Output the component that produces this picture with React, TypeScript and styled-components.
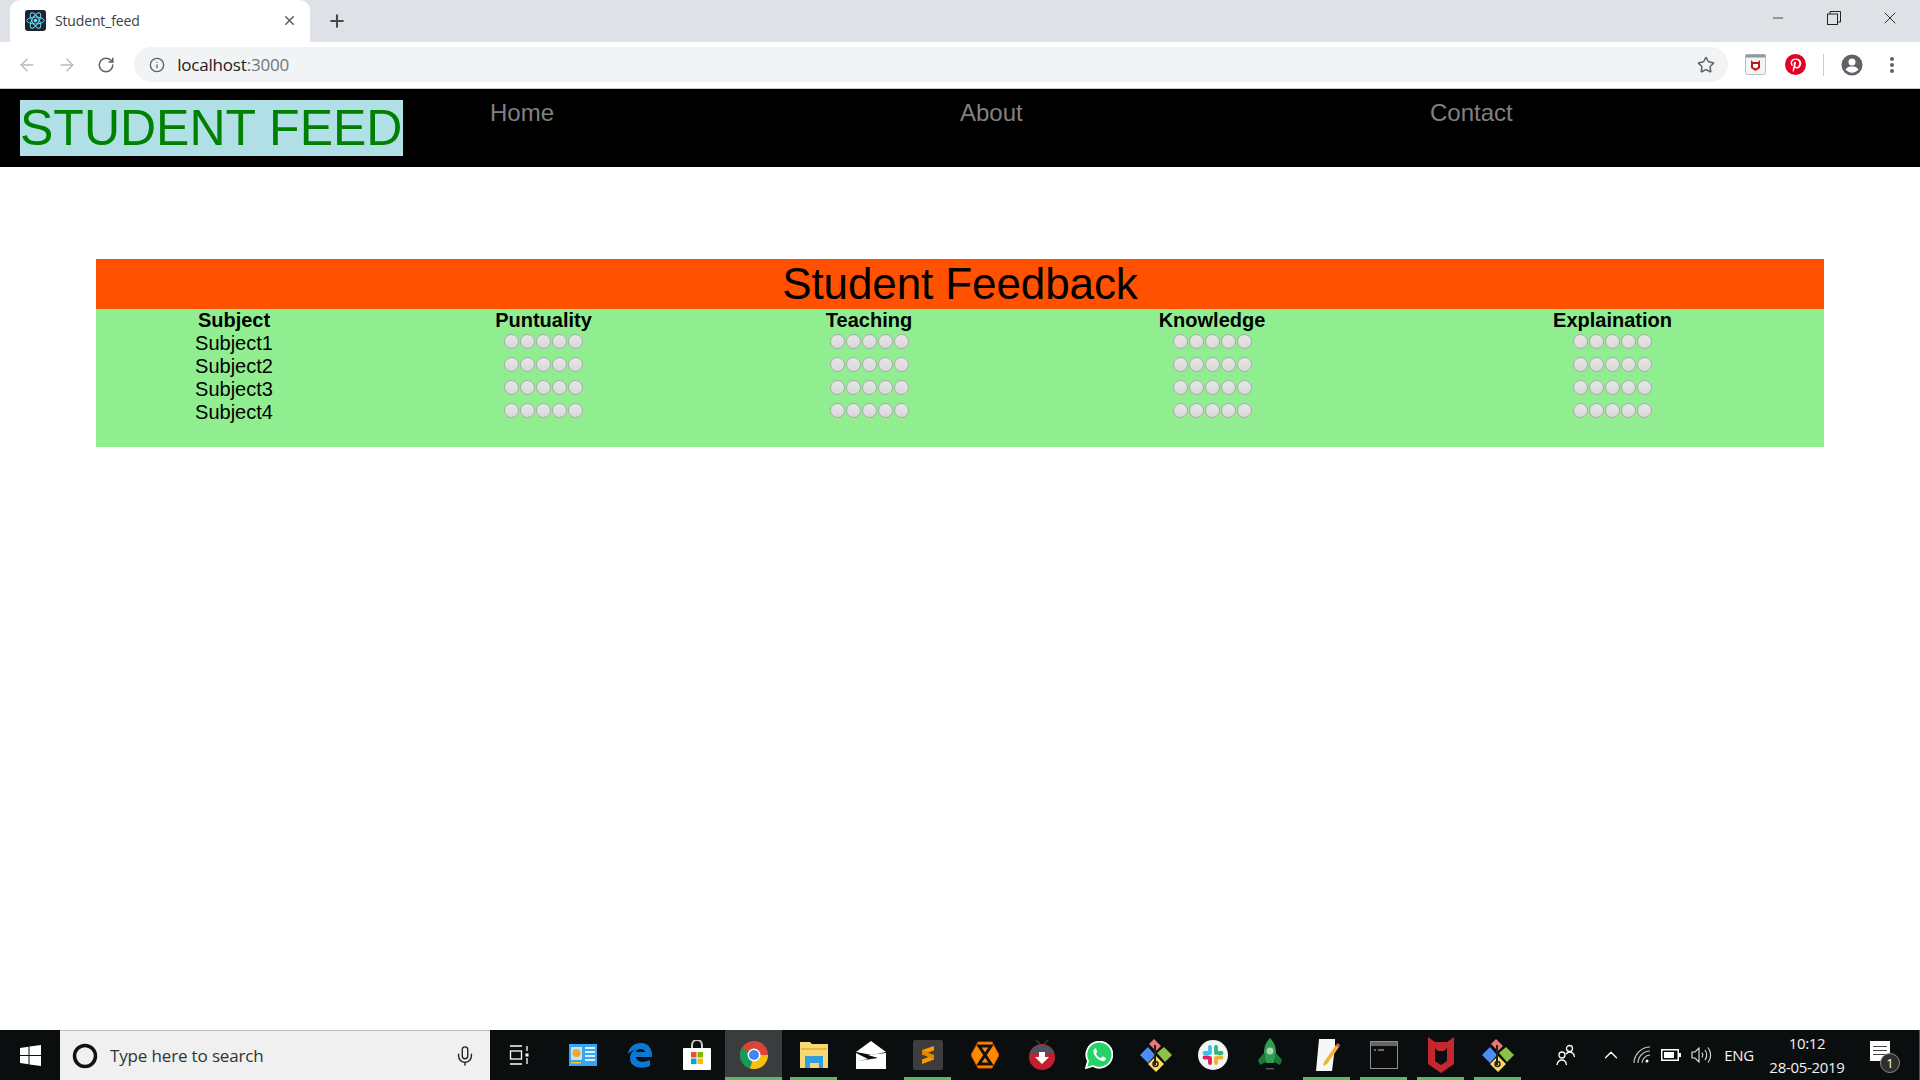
import React from "react";
import styled, { createGlobalStyle } from "styled-components";
import { ArrowLeft, ArrowRight, RotateCw, Star, Info, Plus, X, Minus, Mic, ChevronUp } from "lucide-react";

const GlobalStyle = createGlobalStyle`
  html, body { margin: 0; padding: 0; background: #fff; }
  body { font-family: "Liberation Sans", Arial, sans-serif; }
`;

const Screen = styled.div`
  width: 1920px;
  height: 1080px;
  display: flex;
  flex-direction: column;
  overflow: hidden;
`;

/* browser chrome */
const TabStrip = styled.div`
  height: 42px;
  flex: none;
  background: #dee1e6;
  display: flex;
  align-items: stretch;
  padding-left: 10px;
`;
const Tab = styled.div`
  position: relative;
  width: 300px;
  box-sizing: border-box;
  background: #fff;
  border-radius: 10px 10px 0 0;
  display: flex;
  align-items: center;
  padding: 0 13px 1px 15px;
  color: #3c4043;
  font: 14px "Open Sans", sans-serif;
  letter-spacing: -0.15px;
`;
const TabTitle = styled.span`
  margin-left: 9px;
  flex: 1;
`;
const NewTab = styled.div`
  width: 54px;
  display: flex;
  align-items: center;
  justify-content: center;
  color: #45494d;
`;
const WindowControls = styled.div`
  margin-left: auto;
  margin-right: 2px;
  display: flex;
  align-items: flex-start;
  color: #222;
`;
const WindowButton = styled.div`
  width: 56px;
  height: 35px;
  display: flex;
  align-items: center;
  justify-content: center;
`;
const Toolbar = styled.div`
  height: 47px;
  flex: none;
  box-sizing: border-box;
  background: #fff;
  border-bottom: 1px solid #c4c4c4;
  display: flex;
  align-items: center;
  padding-bottom: 1px;
  padding-left: 7px;
`;
const NavButton = styled.div<{ $off?: boolean }>`
  width: 40px;
  display: flex;
  justify-content: center;
  color: ${(p) => (p.$off ? "#b9bbbe" : "#5f6368")};
`;
const Omnibox = styled.div`
  width: 1604px;
  margin-left: 8px;
  height: 35px;
  border-radius: 18px;
  background: #f1f3f4;
  display: flex;
  align-items: center;
  box-sizing: border-box;
  padding: 0 13px 0 15px;
  color: #5f6368;
`;
const UrlText = styled.span`
  margin-left: 12px;
  flex: 1;
  font: 17px "Open Sans", sans-serif;
  letter-spacing: -0.2px;
  color: #202124;
`;
const UrlPort = styled.span`
  color: #70757a;
`;
const Extensions = styled.div`
  display: flex;
  align-items: center;
  margin-left: 15px;
`;
const ExtSlot = styled.div<{ $w: number }>`
  width: ${(p) => p.$w}px;
  display: flex;
  justify-content: center;
  align-items: center;
`;
const Divider = styled.div`
  width: 1px;
  height: 22px;
  background: #ccc;
  margin: 0 16px 0 0;
`;

/* page */
const Navbar = styled.nav`
  height: 78px;
  flex: none;
  background: #000;
  display: flex;
  align-items: flex-start;
  padding: 11px 0 0 20px;
  box-sizing: border-box;
`;
const Logo = styled.div`
  width: 383px;
  height: 56px;
  background: powderblue;
  color: green;
  font-size: 50px;
  line-height: 57px;
  white-space: nowrap;
`;
const NavLink = styled.a<{ $w: number }>`
  width: ${(p) => p.$w}px;
  color: #808080;
  font-size: 24px;
  line-height: 26px;
  flex: none;
`;
const NavLinks = styled.div`
  display: flex;
  margin-left: 87px;
`;
const Main = styled.main`
  flex: 1;
  background: #fff;
  padding: 92px 96px 0;
`;
const Heading = styled.h1`
  margin: 0;
  height: 50px;
  background: #ff5100;
  color: #000;
  font-size: 44px;
  font-weight: 400;
  line-height: 50px;
  letter-spacing: -0.1px;
  text-align: center;
`;
const Table = styled.div`
  height: 138px;
  background: lightgreen;
  font-size: 20px;
  line-height: 23px;
  color: #000;
`;
const Row = styled.div`
  display: grid;
  grid-template-columns: 276px 343px 308px 378px 423px;
  height: 23px;
`;
const HeadCell = styled.div`
  font-weight: 700;
  text-align: center;
`;
const Cell = styled.div`
  text-align: center;
`;
const RadioGroup = styled.div`
  display: flex;
  justify-content: center;
  gap: 1px;
  padding-top: 2px;
`;
const Radio = styled.span`
  width: 15px;
  height: 15px;
  border-radius: 50%;
  border: 1px solid #a9a9a9;
  box-sizing: border-box;
  background: linear-gradient(#e6e6e6, #d9d9d9);
`;

/* taskbar */
const Taskbar = styled.div`
  height: 50px;
  flex: none;
  background: #0b0e0f;
  display: flex;
  align-items: stretch;
  border-right: 1px solid #555;
  box-sizing: border-box;
`;
const StartButton = styled.div`
  width: 60px;
  display: flex;
  align-items: center;
  justify-content: center;
`;
const SearchBox = styled.div`
  width: 430px;
  flex: none;
  background: #f0f0f0;
  border-top: 1px solid #bdbdbd;
  box-sizing: border-box;
  display: flex;
  align-items: center;
  padding: 0 14px 0 12px;
  color: #333;
  font: 17px "Open Sans", sans-serif;
  letter-spacing: -0.15px;
`;
const SearchText = styled.span`
  margin-left: 12px;
  flex: 1;
`;
const AppSlot = styled.div<{ $on?: boolean; $current?: boolean; $after?: number }>`
  position: relative;
  width: 57px;
  flex: none;
  margin-right: ${(p) => p.$after || 0}px;
  display: flex;
  align-items: center;
  justify-content: center;
  background: ${(p) => (p.$current ? "#3a3d3e" : "transparent")};
  &::after {
    content: "";
    display: ${(p) => (p.$on ? "block" : "none")};
    position: absolute;
    left: ${(p) => (p.$current ? 0 : 5)}px;
    right: ${(p) => (p.$current ? 0 : 5)}px;
    bottom: 0;
    height: 3px;
    background: #5fb760;
  }
`;
const Tray = styled.div`
  display: flex;
  align-items: center;
  margin-left: 24px;
  color: #fff;
`;
const TraySlot = styled.div<{ $w: number; $before?: number }>`
  width: ${(p) => p.$w}px;
  margin-left: ${(p) => p.$before || 0}px;
  flex: none;
  display: flex;
  align-items: center;
  justify-content: center;
`;
const TrayText = styled.span`
  font: 15px "Open Sans", sans-serif;
  letter-spacing: -0.3px;
  color: #f2f2f2;
`;
const Clock = styled.div`
  width: 92px;
  flex: none;
  text-align: center;
  font: 15px/24px "Open Sans", sans-serif;
  letter-spacing: -0.3px;
  color: #f2f2f2;
`;
const NotifyBadge = styled.span`
  position: absolute;
  right: -10px;
  bottom: -12px;
  width: 20px;
  height: 20px;
  box-sizing: border-box;
  border-radius: 50%;
  background: #2e2e2e;
  border: 1px solid #8a8a8a;
  color: #fff;
  font: 13px/18px "Open Sans", sans-serif;
  text-align: center;
`;
const NotifyIcon = styled.div`
  position: relative;
  width: 20px;
  height: 20px;
  margin-top: -8px;
  box-sizing: border-box;
  padding-top: 5px;
  background: #fff;
`;
const NotifyLine = styled.div`
  height: 1px;
  margin: 0 3px 3px;
  background: #444;
`;

const ReactFavicon = () => (
  <svg width="21" height="21" viewBox="0 0 17 17">
    <rect width="17" height="17" rx="2" fill="#20232a" />
    <g fill="none" stroke="#61dafb" strokeWidth="0.8">
      <ellipse cx="8.5" cy="8.5" rx="7" ry="2.8" />
      <ellipse cx="8.5" cy="8.5" rx="7" ry="2.8" transform="rotate(60 8.5 8.5)" />
      <ellipse cx="8.5" cy="8.5" rx="7" ry="2.8" transform="rotate(120 8.5 8.5)" />
    </g>
    <circle cx="8.5" cy="8.5" r="1.5" fill="#61dafb" />
  </svg>
);

const RestoreIcon = () => (
  <svg width="14" height="14" viewBox="0 0 14 14" fill="none" stroke="#222">
    <rect x="0.5" y="3" width="10" height="10.5" />
    <path d="M3 3V0.5H13.5V11H10.5" />
  </svg>
);

const PocketIcon = () => (
  <svg width="21" height="21" viewBox="0 0 21 21">
    <rect x="0.5" y="0.5" width="20" height="20" rx="2" fill="#f4f4f4" stroke="#b9bec2" />
    <rect x="0.5" y="0.5" width="20" height="3" fill="#8b9aa3" />
    <path d="M6 6l2 2h5l2-2v8l-4.500 3L6 14z" fill="#c01818" />
    <path d="M8 10h5v3l-2.500 1.500L8 13z" fill="#fff" />
  </svg>
);

const PinterestIcon = () => (
  <svg width="21" height="21" viewBox="0 0 21 21">
    <circle cx="10.500" cy="10.500" r="10.500" fill="#e60023" />
    <path
      d="M10.800 4.400c-3.400 0-5.200 2.200-5.200 4.600 0 1.100.600 2.500 1.600 2.900.3.100.3 0 .5-.7 0-.2 0-.3-.1-.5-1.200-1.700-.2-5 3-5 2.300 0 3.600 1.400 3.600 3.300 0 2.400-1.100 4.100-2.600 4.100-.8 0-1.500-.7-1.300-1.500.3-1 .7-2 .7-2.700 0-1.700-2.400-1.400-2.400.8 0 .7.200 1.100.200 1.100l-1 4.200c-.2.900 0 2.200 0 3.100 0 .1.200.1.200 0 .400-.6 1.100-1.700 1.300-2.500l.5-2c.3.500 1.100 1 2 1 2.600 0 4.500-2.400 4.500-5.400 0-2.900-2.400-4.800-5.500-4.800z"
      fill="#fff"
    />
  </svg>
);

const AvatarIcon = () => (
  <svg width="22" height="22" viewBox="0 0 22 22">
    <circle cx="11" cy="11" r="10.500" fill="#5f6368" />
    <circle cx="11" cy="8" r="3.500" fill="#fff" />
    <path d="M4.500 15.500c1.500-2.500 4-3 6.500-3s5 .5 6.500 3c-1.500 2-4 3.200-6.500 3.200s-5-1.200-6.500-3.200z" fill="#fff" />
  </svg>
);

const MenuDots = () => (
  <svg width="6" height="18" viewBox="0 0 6 18" fill="#5f6368">
    <circle cx="3" cy="3" r="2" />
    <circle cx="3" cy="9" r="2" />
    <circle cx="3" cy="15" r="2" />
  </svg>
);

const WindowsLogo = () => (
  <svg width="21" height="21" viewBox="0 0 21 21" fill="#fff">
    <path d="M0 3l8.500-1.200V10H0zM9.500 1.600L21 0v10H9.500zM0 11h8.500v8.200L0 18zM9.500 11H21v10L9.500 19.400z" />
  </svg>
);

const CortanaRing = () => (
  <svg width="26" height="26" viewBox="0 0 26 26">
    <circle cx="13" cy="13" r="10.500" fill="none" stroke="#111" strokeWidth="3.500" />
  </svg>
);

const TaskView = () => (
  <svg width="20" height="20" viewBox="0 0 20 20" fill="none" stroke="#fff" strokeWidth="1.300">
    <path d="M1 1h12M1 19h12M18 1v5M18 13v6" />
    <rect x="1.500" y="6" width="11" height="8" />
    <rect x="16.500" y="8.500" width="3" height="3" fill="#fff" stroke="none" />
  </svg>
);

const ControlPanel = () => (
  <svg width="28" height="22" viewBox="0 0 28 22">
    <rect width="28" height="22" fill="#3aa5ee" />
    <rect x="2" y="3" width="11" height="13" fill="#bfe3fb" />
    <circle cx="7.500" cy="9" r="4" fill="#f5a623" />
    <path d="M16 4h10M16 8h10M16 12h10M16 16h10" stroke="#d8efff" strokeWidth="2" />
    <rect x="2" y="18" width="10" height="1.500" fill="#f5c518" />
  </svg>
);

const EdgeIcon = () => (
  <svg width="26" height="26" viewBox="0 0 26 26">
    <path
      d="M1 12C2 5 7 1 14 1c7 0 11 5 11 12v2H9c.3 4.500 6 6.500 14 3v6c-8 3.500-20 2-20-8 0-4 2-7 6-9-3 1-6 3-8 5zM9 10h9c0-4-9-4-9 0z"
      fill="#0a78d4"
    />
  </svg>
);

const StoreIcon = () => (
  <svg width="28" height="30" viewBox="0 0 28 30">
    <path d="M9 9V5a5 5 0 0 1 10 0v4" fill="none" stroke="#ccc" strokeWidth="2" />
    <rect y="8" width="28" height="22" rx="1" fill="#fff" />
    <rect x="8" y="12" width="5.500" height="5.500" fill="#f25022" />
    <rect x="14.500" y="12" width="5.500" height="5.500" fill="#7fba00" />
    <rect x="8" y="18.500" width="5.500" height="5.500" fill="#00a4ef" />
    <rect x="14.500" y="18.500" width="5.500" height="5.500" fill="#ffb900" />
  </svg>
);

const ChromeIcon = () => (
  <svg width="28" height="28" viewBox="0 0 28 28">
    <circle cx="14" cy="14" r="14" fill="#db4437" />
    <path d="M14 14L2 7A14 14 0 0 0 10 27.500z" fill="#0f9d58" />
    <path d="M14 14h14A14 14 0 0 1 10 27.500z" fill="#f4c20d" />
    <circle cx="14" cy="14" r="6.500" fill="#fff" />
    <circle cx="14" cy="14" r="5" fill="#4285f4" />
  </svg>
);

const FolderIcon = () => (
  <svg width="28" height="26" viewBox="0 0 28 26">
    <path d="M0 0h10l2 2h16v24H0z" fill="#f8d775" />
    <rect x="1" y="6" width="26" height="2" fill="#e8b93f" />
    <path d="M5 26V17h18v9h-4v-5H10v5z" fill="#2f9fe0" />
    <rect x="5" y="14" width="18" height="4" fill="#2f9fe0" />
  </svg>
);

const MailIcon = () => (
  <svg width="30" height="28" viewBox="0 0 30 28" fill="#fff">
    <path d="M0 11L15 0l15 11-14 3z" />
    <path d="M0 12l12 6L2 20l20-3-10-3 18-2v16H0z" />
  </svg>
);

const SublimeIcon = () => (
  <svg width="30" height="30" viewBox="0 0 30 30">
    <rect width="30" height="30" rx="2" fill="#3d3d3d" />
    <path d="M21 6v4.500L9 14.500V10zM21 15v4.500L9 24v-4.500z" fill="#ff9800" />
    <path d="M9 10v4.500l12 5V15z" fill="#e08600" />
  </svg>
);

const HexIcon = () => (
  <svg width="28" height="28" viewBox="0 0 28 28">
    <path d="M7 1h14l7 13-7 13H7L0 14z" fill="#ff8a00" stroke="#e65100" />
    <path d="M8 5h12L8 23h12z" fill="none" stroke="#111" strokeWidth="3" />
  </svg>
);

const DownloadIcon = () => (
  <svg width="28" height="32" viewBox="0 0 28 32">
    <path d="M8 1l6 6 6-6" fill="none" stroke="#33393f" strokeWidth="1.500" />
    <circle cx="14" cy="18" r="13" fill="#c2202e" />
    <path d="M1.500 15a13 13 0 0 1 25 0z" fill="#4b5560" />
    <path d="M11 13h6v5h4l-7 7-7-7h4z" fill="#fff" />
  </svg>
);

const WhatsAppIcon = () => (
  <svg width="28" height="28" viewBox="0 0 28 28">
    <path d="M1 27l2-7a13 13 0 1 1 5 5z" fill="#25d366" stroke="#fff" strokeWidth="1.800" />
    <path
      d="M10 7.500c-1 .5-2 2-1.500 4 .8 3.500 4.500 7.500 8.500 8.500 2 .5 3.500-.5 4-2 .2-.7 0-1-.5-1.200l-2.500-1.200c-.5-.2-.8 0-1 .3l-.8 1c-.3.300-.6.300-1 .1-1.500-.7-3-2-4-3.700-.2-.4-.1-.7.200-1l.6-.8c.2-.3.200-.6 0-1L11.300 8c-.3-.7-.7-.8-1.300-.5z"
      fill="#fff"
    />
  </svg>
);

const SourceTreeIcon = () => (
  <svg width="32" height="36" viewBox="0 0 32 36">
    <path d="M9 7l5-5 7 7-5 5z" fill="#e9767a" />
    <path d="M0 18l8-8 7 8-7 8z" fill="#4d8cf5" />
    <path d="M17 16l7-6 8 8-7 7z" fill="#8bc34a" />
    <path d="M8 27l8-8 8 8-8 8z" fill="#ffd966" />
    <path d="M15 8v20" stroke="#222" strokeWidth="2" />
    <circle cx="15.500" cy="27" r="2.500" fill="none" stroke="#222" strokeWidth="1.500" />
  </svg>
);

const SlackIcon = () => (
  <svg width="30" height="30" viewBox="0 0 30 30">
    <circle cx="15" cy="15" r="15" fill="#f4f4f4" />
    <g strokeWidth="3.800" strokeLinecap="round">
      <path d="M12 7v6M6.500 13H10" stroke="#36c5f0" />
      <path d="M18 7v6M23.500 13H21" stroke="#2eb67d" />
      <path d="M18 23v-5M23.500 17.500H20" stroke="#ecb22e" />
      <path d="M12 23v-5M6.500 17.500H10" stroke="#e01e5a" />
    </g>
  </svg>
);

const RocketIcon = () => (
  <svg width="26" height="34" viewBox="0 0 26 34">
    <path d="M13 0c5 5 6 10 6 15l-2 10H9L7 15c0-5 1-10 6-15z" fill="#2e9e4f" />
    <path d="M7 15l-6 7 2 5 6-3zM19 15l6 7-2 5-6-3z" fill="#1d7a39" />
    <circle cx="13" cy="13" r="3.500" fill="#a8d8b9" />
    <rect x="9" y="30" width="8" height="1.500" fill="#555" />
  </svg>
);

const NotepadIcon = () => (
  <svg width="26" height="34" viewBox="0 0 26 34">
    <path d="M5 1h16v8L18 33H2z" fill="#f7f7f7" />
    <path d="M10 24l12-17 3 2-12 17-4 2z" fill="#f5b335" />
    <path d="M22 7l1.500-2 3 2-1.500 2z" fill="#e2574c" />
  </svg>
);

const TerminalIcon = () => (
  <svg width="28" height="28" viewBox="0 0 28 28">
    <rect x="0.500" y="0.500" width="27" height="27" fill="#0c0c0c" stroke="#8a8f94" />
    <rect x="1" y="1" width="26" height="4" fill="#666" />
    <path d="M4 9h2M8 9h6" stroke="#ccc" />
  </svg>
);

const McAfeeIcon = () => (
  <svg width="26" height="36" viewBox="0 0 26 36">
    <path d="M0 0l7 5h12l7-5v27l-13 9-13-9z" fill="#c4282e" />
    <path d="M7 11l3 3h6l3-3v13l-6 4-6-4z" fill="#0b0e0f" />
  </svg>
);

const PeopleIcon = () => (
  <svg width="20" height="22" viewBox="0 0 20 22" fill="none" stroke="#fff" strokeWidth="1.300">
    <circle cx="6" cy="11" r="3" />
    <path d="M1 21c.5-3 2-5 5-5s4 2 4.500 5" />
    <circle cx="13.500" cy="4.500" r="3" />
    <path d="M10 10c1-1 2-2 3.500-2 2.500 0 4.500 2 5 5" />
  </svg>
);

const WifiIcon = () => (
  <svg width="18" height="18" viewBox="0 0 18 18" fill="none" stroke="#c9c9c9" strokeWidth="1.100">
    <path d="M1 17C1 9 8 1 17 1M5 17c0-6 5-12 12-12M9 17c0-3 3-8 8-8" />
    <circle cx="14" cy="15" r="1.500" fill="#fff" stroke="none" />
  </svg>
);

const BatteryIcon = () => (
  <svg width="20" height="12" viewBox="0 0 20 12">
    <rect x="0.750" y="0.750" width="16.500" height="10.500" fill="none" stroke="#fff" strokeWidth="1.500" />
    <rect x="3" y="3" width="10" height="6" fill="#fff" />
    <rect x="18" y="4" width="2" height="4" fill="#fff" />
  </svg>
);

const SpeakerIcon = () => (
  <svg width="21" height="18" viewBox="0 0 21 18" fill="none" stroke="#e6e6e6" strokeWidth="1.100">
    <path d="M1 6h3l4-4v14l-4-4H1z" />
    <path d="M11 6.500c1 1.500 1 3.500 0 5M14 4c2 3 2 7 0 10M17 1.500c3.500 4.500 3.500 10.500 0 15" />
  </svg>
);

const subjects = ["Subject1", "Subject2", "Subject3", "Subject4"];
const columns = ["Puntuality", "Teaching", "Knowledge", "Explaination"];
const ratings = [1, 2, 3, 4, 5];

const apps = [
  { id: "taskview", icon: <TaskView />, after: 7 },
  { id: "panel", icon: <ControlPanel /> },
  { id: "edge", icon: <EdgeIcon /> },
  { id: "store", icon: <StoreIcon /> },
  { id: "chrome", icon: <ChromeIcon />, on: true, current: true, after: 3 },
  { id: "folder", icon: <FolderIcon />, on: true },
  { id: "mail", icon: <MailIcon /> },
  { id: "sublime", icon: <SublimeIcon />, on: true },
  { id: "hex", icon: <HexIcon /> },
  { id: "download", icon: <DownloadIcon /> },
  { id: "whatsapp", icon: <WhatsAppIcon /> },
  { id: "sourcetree", icon: <SourceTreeIcon /> },
  { id: "slack", icon: <SlackIcon /> },
  { id: "rocket", icon: <RocketIcon /> },
  { id: "notepad", icon: <NotepadIcon />, on: true },
  { id: "terminal", icon: <TerminalIcon />, on: true },
  { id: "mcafee", icon: <McAfeeIcon />, on: true },
  { id: "sourcetree2", icon: <SourceTreeIcon />, on: true },
];

function App() {
  return (
    <Screen>
      <GlobalStyle />
      <TabStrip>
        <Tab>
          <ReactFavicon />
          <TabTitle>Student_feed</TabTitle>
          <X size={15} color="#5f6368" strokeWidth={2.5} />
        </Tab>
        <NewTab>
          <Plus size={20} strokeWidth={2.5} />
        </NewTab>
        <WindowControls>
          <WindowButton>
            <Minus size={16} strokeWidth={1.2} />
          </WindowButton>
          <WindowButton>
            <RestoreIcon />
          </WindowButton>
          <WindowButton>
            <X size={20} strokeWidth={1.1} />
          </WindowButton>
        </WindowControls>
      </TabStrip>
      <Toolbar>
        <NavButton $off>
          <ArrowLeft size={20} strokeWidth={1.8} />
        </NavButton>
        <NavButton $off>
          <ArrowRight size={20} strokeWidth={1.8} />
        </NavButton>
        <NavButton>
          <RotateCw size={18} strokeWidth={2} />
        </NavButton>
        <Omnibox>
          <Info size={16} strokeWidth={2} />
          <UrlText>
            localhost<UrlPort>:3000</UrlPort>
          </UrlText>
          <Star size={18} strokeWidth={2} />
        </Omnibox>
        <Extensions>
          <ExtSlot $w={25}>
            <PocketIcon />
          </ExtSlot>
          <ExtSlot $w={55}>
            <PinterestIcon />
          </ExtSlot>
          <Divider />
          <ExtSlot $w={24}>
            <AvatarIcon />
          </ExtSlot>
          <ExtSlot $w={56}>
            <MenuDots />
          </ExtSlot>
        </Extensions>
      </Toolbar>
      <Navbar>
        <Logo>STUDENT FEED</Logo>
        <NavLinks>
          <NavLink $w={470}>Home</NavLink>
          <NavLink $w={470}>About</NavLink>
          <NavLink $w={100}>Contact</NavLink>
        </NavLinks>
      </Navbar>
      <Main>
        <Heading>Student Feedback</Heading>
        <Table>
          <Row>
            <HeadCell>Subject</HeadCell>
            {columns.map((c) => (
              <HeadCell key={c}>{c}</HeadCell>
            ))}
          </Row>
          {subjects.map((s) => (
            <Row key={s}>
              <Cell>{s}</Cell>
              {columns.map((c) => (
                <RadioGroup key={c}>
                  {ratings.map((r) => (
                    <Radio key={r} />
                  ))}
                </RadioGroup>
              ))}
            </Row>
          ))}
        </Table>
      </Main>
      <Taskbar>
        <StartButton>
          <WindowsLogo />
        </StartButton>
        <SearchBox>
          <CortanaRing />
          <SearchText>Type here to search</SearchText>
          <Mic size={22} strokeWidth={1.5} color="#222" />
        </SearchBox>
        {apps.map((a) => (
          <AppSlot key={a.id} $on={a.on} $current={a.current} $after={a.after}>
            {a.icon}
          </AppSlot>
        ))}
        <Tray>
          <TraySlot $w={32}>
            <PeopleIcon />
          </TraySlot>
          <TraySlot $w={30} $before={14}>
            <ChevronUp size={22} strokeWidth={1.4} />
          </TraySlot>
          <TraySlot $w={30} $before={1}>
            <WifiIcon />
          </TraySlot>
          <TraySlot $w={28}>
            <BatteryIcon />
          </TraySlot>
          <TraySlot $w={32}>
            <SpeakerIcon />
          </TraySlot>
          <TraySlot $w={44}>
            <TrayText>ENG</TrayText>
          </TraySlot>
          <Clock>
            10:12
            <br />
            28-05-2019
          </Clock>
          <TraySlot $w={54}>
            <NotifyIcon>
              <NotifyLine />
              <NotifyLine />
              <NotifyLine />
              <NotifyBadge>1</NotifyBadge>
            </NotifyIcon>
          </TraySlot>
        </Tray>
      </Taskbar>
    </Screen>
  );
}

export default App;
